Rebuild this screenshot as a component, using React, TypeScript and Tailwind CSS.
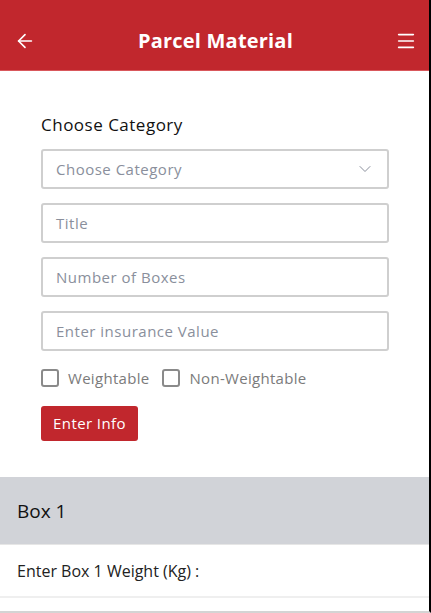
import { ArrowLeft, ChevronDown, Menu } from "lucide-react";

const fields = ["Title", "Number of Boxes", "Enter insurance Value"];

const App = () => {
  return (
    <div className="w-[431px] h-[613px] overflow-hidden bg-white border-r-2 border-r-black border-b-2 border-b-[#d4d4d4] font-['Open_Sans',sans-serif]">
      {/* Header */}
      <div className="h-[71px] bg-[#c1272d] flex items-center justify-between pl-[14px] pr-[12px] pt-[11px] border-b border-b-[#d9585c]">
        <ArrowLeft className="w-[22px] h-[22px] text-white" strokeWidth={1.8} />
        <h1 className="text-white text-[20px] font-bold tracking-[0.2px]">Parcel Material</h1>
        <Menu className="w-[22px] h-[22px] text-white" strokeWidth={1.8} />
      </div>

      {/* Form */}
      <div className="px-[41px] pt-[43px] pb-[36px]">
        <p className="text-[17px] font-medium text-[#111] tracking-[0.5px] leading-[22px]">Choose Category</p>
        <div className="mt-[13px] flex flex-col gap-[14px]">
          <div className="h-[40px] w-[348px] rounded-[3px] border-2 border-[#cfcfcf] flex items-center justify-between pl-[13px] pr-[12px]">
            <span className="text-[15px] text-[#8a8f9c] tracking-[0.5px]">Choose Category</span>
            <ChevronDown className="w-[20px] h-[20px] text-[#8a8f9c]" strokeWidth={1.2} />
          </div>
          {fields.map((f) => (
            <div
              key={f}
              className="h-[40px] w-[348px] rounded-[3px] border-2 border-[#cfcfcf] flex items-center pl-[13px]"
            >
              <span className="text-[15px] text-[#8a8f9c] tracking-[0.5px]">{f}</span>
            </div>
          ))}
        </div>
        <div className="mt-[18px] h-[18px] flex items-center text-[15px] text-[#7b7b7b] tracking-[0.3px]">
          <span className="w-[18px] h-[18px] border-2 border-[#8a8a8a] rounded-[3px]" />
          <span className="ml-[9px]">Weightable</span>
          <span className="ml-[13px] w-[18px] h-[18px] border-2 border-[#8a8a8a] rounded-[3px]" />
          <span className="ml-[9px]">Non-Weightable</span>
        </div>
        <button className="mt-[19px] h-[35px] w-[97px] rounded-[3px] bg-[#c1272d] text-white text-[15px] font-medium tracking-[0.4px] flex items-center justify-center">
          Enter Info
        </button>
      </div>

      {/* Box section */}
      <div className="h-[68px] bg-[#d1d3d8] flex items-center pt-[2px] px-[17px] border-b border-b-[#e6e6e6]">
        <span className="text-[19px] text-[#111]">Box 1</span>
      </div>
      <div className="h-[53px] flex items-center px-[17px] border-b-2 border-b-[#efefef]">
        <span className="text-[16px] text-[#222]">Enter Box 1 Weight (Kg) :</span>
      </div>
    </div>
  );
};

export default App;
